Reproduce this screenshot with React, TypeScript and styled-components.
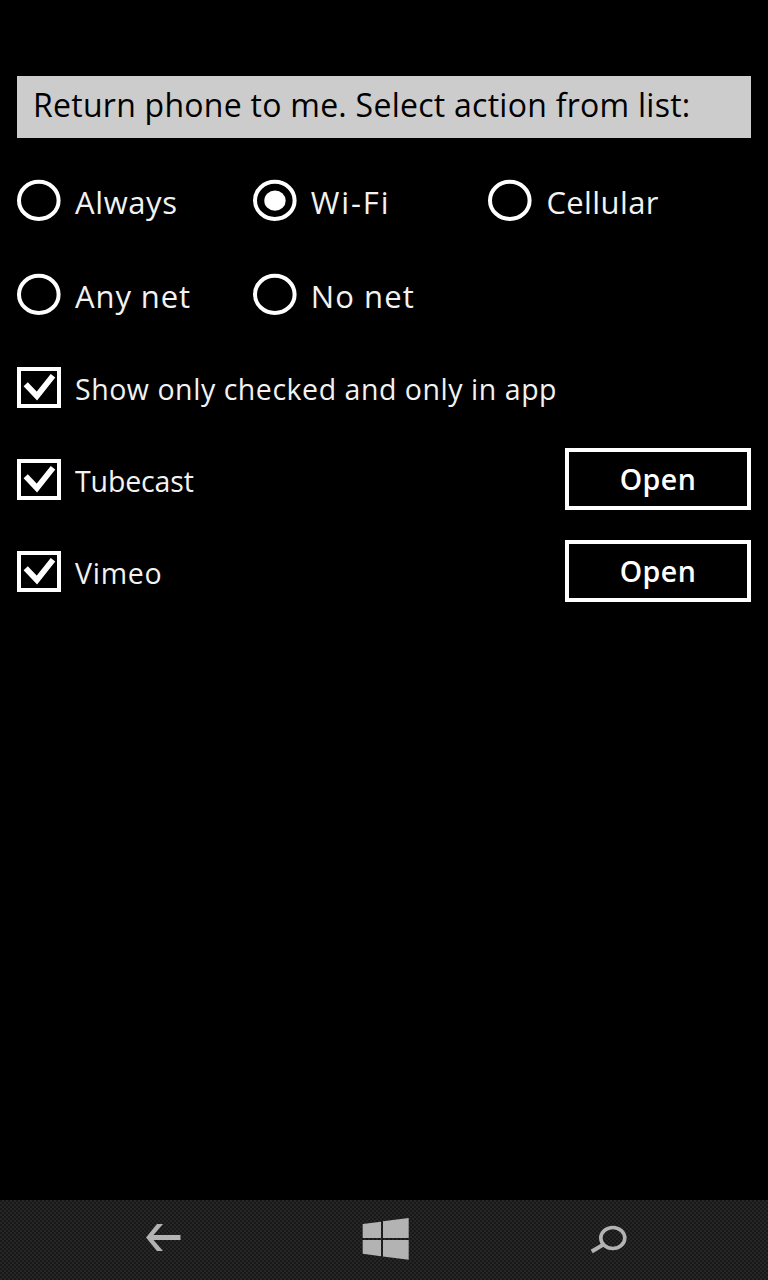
import React from "react";
import styled, { createGlobalStyle } from "styled-components";

const networks = [
  { name: "Always", tracking: 0.6 },
  { name: "Wi-Fi", tracking: 1.9 },
  { name: "Cellular", tracking: 0.4 },
  { name: "Any net", tracking: 0.9 },
  { name: "No net", tracking: 1.1 },
];

const apps = [
  { name: "Tubecast", tracking: -0.15 },
  { name: "Vimeo", tracking: 0.75 },
];

const App = () => {
  return (
    <Phone>
      <GlobalStyle />
      <Content>
        <Header>
          <Label $size={32} $tracking={0.26}>
            Return phone to me. Select action from list:
          </Label>
        </Header>
        <RadioGrid>
          {networks.map((net) => (
            <Option key={net.name}>
              <Radio checked={net.name === "Wi-Fi"} />
              <OptionLabel $size={31} $tracking={net.tracking}>
                {net.name}
              </OptionLabel>
            </Option>
          ))}
        </RadioGrid>
        <AppRow>
          <Option>
            <Check />
            <OptionLabel $size={28.5} $tracking={0.54}>
              Show only checked and only in app
            </OptionLabel>
          </Option>
        </AppRow>
        {apps.map((app) => (
          <AppRow key={app.name}>
            <Option>
              <Check />
              <OptionLabel $size={28.5} $tracking={app.tracking}>
                {app.name}
              </OptionLabel>
            </Option>
            <OpenButton>Open</OpenButton>
          </AppRow>
        ))}
      </Content>
      <NavBar>
        <NavSlot>
          <svg width="70" height="80" viewBox="130 1200 70 80">
            <path
              d="M146 1237.5 L157 1224 H163 L153.5 1235 H180.5 V1240 H153.5 L163 1251 H157 Z"
              fill="#b3b3b3"
            />
          </svg>
        </NavSlot>
        <NavSlot>
          <svg width="70" height="80" viewBox="350 1200 70 80">
            <path
              d="M362.7 1224 L381 1221.7 V1238 H362.7 Z M383 1221.3 L408.7 1218 V1238 H383 Z M362.7 1240 H381 V1256.2 L362.7 1253.8 Z M383 1240 H408.7 V1259.7 L383 1256.5 Z"
              fill="#b3b3b3"
            />
          </svg>
        </NavSlot>
        <NavSlot>
          <svg width="70" height="80" viewBox="580 1200 70 80">
            <g fill="none" stroke="#b3b3b3" strokeWidth="3.6">
              <ellipse cx="612.8" cy="1238" rx="12" ry="10.5" />
              <path d="M603.5 1244.5 L591.7 1251.5" strokeWidth="4" />
            </g>
          </svg>
        </NavSlot>
      </NavBar>
    </Phone>
  );
};

const Radio = ({ checked }: { checked: boolean }) => (
  <svg width="44" height="42" viewBox="0 0 44 42">
    <ellipse cx="21.8" cy="20.4" rx="19.8" ry="18.6" fill="none" stroke="#fff" strokeWidth="4" />
    {checked && <ellipse cx="22" cy="20.7" rx="10.7" ry="10.1" fill="#fff" />}
  </svg>
);

const Check = () => (
  <svg width="44" height="41" viewBox="0 0 44 41">
    <rect x="2" y="2" width="40" height="37" fill="none" stroke="#fff" strokeWidth="4" />
    <path d="M8.7 17.2 L19.9 29.1 L36 8.8" fill="none" stroke="#fff" strokeWidth="5.8" />
  </svg>
);

const GlobalStyle = createGlobalStyle`
  body {
    margin: 0;
    background: #000;
  }
`;

const Phone = styled.div`
  width: 768px;
  height: 1280px;
  display: flex;
  flex-direction: column;
  background: #000;
  color: #fff;
  font-family: "Open Sans", "Noto Sans", sans-serif;
`;

const Content = styled.div`
  flex: 1;
  padding: 76px 17px 0;
`;

const Header = styled.div`
  height: 62px;
  box-sizing: border-box;
  padding: 8px 0 0 16px;
  background: #ccc;
  color: #000;
`;

const Label = styled.span<{ $size: number; $tracking: number }>`
  display: block;
  font-size: ${(p) => p.$size}px;
  line-height: 42px;
  letter-spacing: ${(p) => p.$tracking}px;
  white-space: nowrap;
`;

const OptionLabel = styled(Label)`
  margin-top: 1px;
  color: #f2f2f2;
`;

const RadioGrid = styled.div`
  display: grid;
  grid-template-columns: repeat(3, 235.7px);
  row-gap: 52px;
  padding-top: 42px;
`;

const Option = styled.div`
  display: flex;
  align-items: flex-start;
  gap: 14px;
  height: 42px;

  svg {
    flex: none;
    overflow: visible;
  }
`;

const AppRow = styled.div`
  display: flex;
  justify-content: space-between;
  align-items: center;
  height: 62px;
  margin-bottom: 30px;

  ${Option} {
    height: 40px;
  }

  ${RadioGrid} + & {
    margin-top: 40px;
  }
`;

const OpenButton = styled.button`
  width: 186px;
  height: 62px;
  padding: 0 0 1px;
  border: 4px solid #fff;
  background: #000;
  color: #fff;
  font: 600 28.5px "Open Sans", "Noto Sans", sans-serif;
  letter-spacing: 0.5px;
`;

const NavBar = styled.div`
  display: flex;
  gap: 150px;
  height: 80px;
  padding-left: 130px;
  background: repeating-conic-gradient(#262626 0 25%, #181818 0 50%) 0 0 / 4px 4px;
`;

const NavSlot = styled.div`
  width: 70px;

  & + & + & {
    margin-left: 10px;
  }
`;

export default App;
